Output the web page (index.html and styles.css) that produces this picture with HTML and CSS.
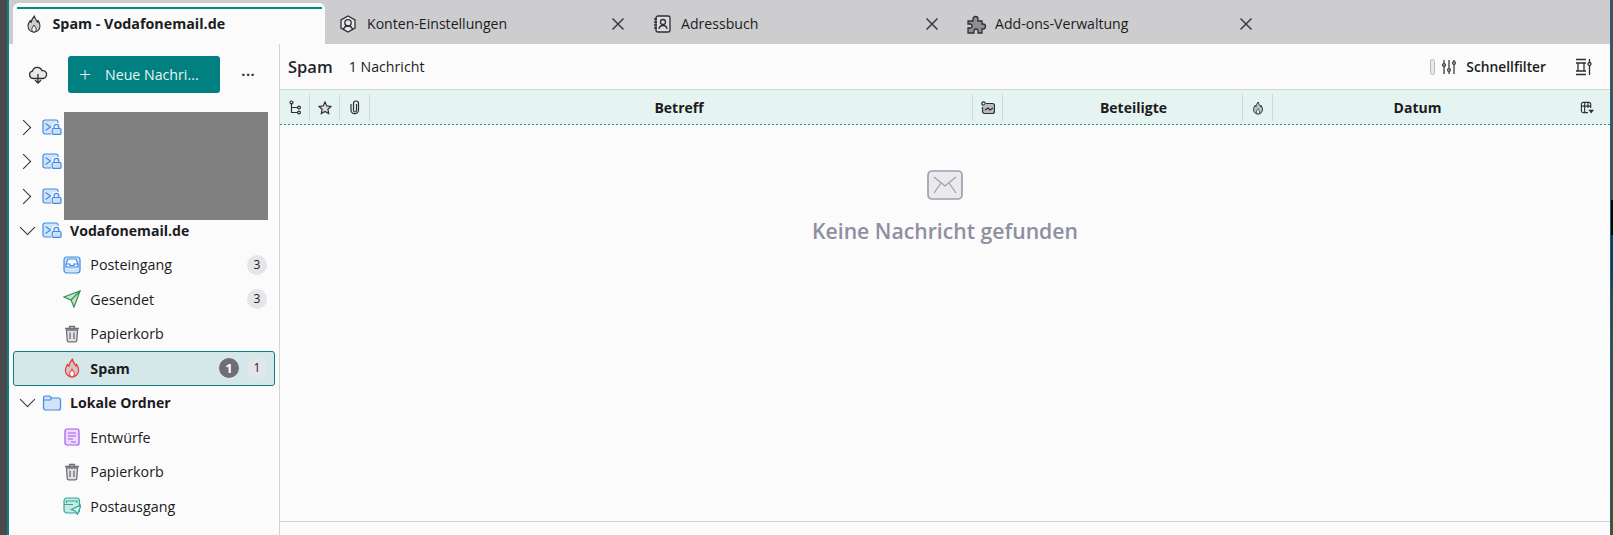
FILE: index.html
```html
<!DOCTYPE html>
<html lang="de">
<head>
<meta charset="utf-8">
<title>Spam - Vodafonemail.de</title>
<link rel="stylesheet" href="styles.css">
</head>
<body>
<svg width="0" height="0" class="defs">
  <defs>
    <symbol id="acct" viewBox="0 0 20 16">
      <path d="M1 3a2 2 0 0 1 2-2h11a2 2 0 0 1 2 2v10a2 2 0 0 1-2 2H3a2 2 0 0 1-2-2z" fill="#d3e4f8" stroke="#3d8be8" stroke-width="1.2"/>
      <path d="M3.500 4.500 8.500 8l-5 3.500" fill="none" stroke="#3d8be8" stroke-width="1.2"/>
      <path d="M11.500 9.500V8a2.900 2.900 0 0 1 5.800 0v1.500" fill="none" stroke="#fbfbfc" stroke-width="3.400"/>
      <rect x="9" y="8.500" width="11" height="7.500" fill="#fbfbfc"/>
      <path d="M12 9.500V7.800a2.400 2.400 0 0 1 4.800 0v1.700" fill="none" stroke="#3d8be8" stroke-width="1.2"/>
      <rect x="10.200" y="9.500" width="8.800" height="5.800" rx="1" fill="#cfe1f7" stroke="#3d8be8" stroke-width="1.2"/>
    </symbol>
    <symbol id="trash" viewBox="0 0 16 18">
      <path d="M2.500 5h11l-.7 10.500a1.500 1.500 0 0 1-1.500 1.400H4.700a1.500 1.500 0 0 1-1.500-1.400z" fill="#e0e0e5" stroke="#6e6e78" stroke-width="1.3"/>
      <path d="M1 3.500h14M5.500 3V1.500h5V3M6 7.500V14M10 7.500V14" fill="none" stroke="#6e6e78" stroke-width="1.3"/>
    </symbol>
    <symbol id="flame" viewBox="0 0 16 18">
      <g transform="translate(1.2 0) scale(.85 1)">
        <path d="M8.500 1c.3 3 2.200 4 3.700 6.200.4-.6.500-1 .5-1.700C14 7 15 9 15 11c0 3.600-3 6-7 6s-7-2.400-7-6c0-2.400 1.400-4 2.400-5.400.3.800.6 1.300 1.300 1.800C4.900 5 6.500 2.800 8.500 1z" fill="currentColor" fill-opacity=".22" stroke="currentColor" stroke-width="1.3" stroke-linejoin="round"/>
        <path d="M8 10c.4 1.400 2.600 2.300 2.600 4.200 0 1.100-.7 2-1.600 2.800H7c-.9-.8-1.600-1.700-1.600-2.800C5.400 12.300 7.600 11.400 8 10z" fill="#fbfbfc" fill-opacity=".85" stroke="currentColor" stroke-width="1"/>
      </g>
    </symbol>
    <symbol id="close" viewBox="0 0 14 14">
      <path d="M1.500 1.500l11 11M12.500 1.500l-11 11" fill="none" stroke="#3a3a40" stroke-width="1.500"/>
    </symbol>
  </defs>
</svg>

<div class="desk-left"></div>
<div class="window">
  <nav class="tabs">
    <div class="tab tab-active">
      <svg class="tab-icon" width="16" height="18"><use href="#flame"/></svg>
      <span class="tab-title">Spam - Vodafonemail.de</span>
    </div>
    <div class="tab">
      <svg class="tab-icon" width="18" height="18" viewBox="0 0 18 18" fill="none" stroke="#2e2e33" stroke-width="1.3">
        <path d="M9 1l7 4v8l-7 4-7-4V5z" fill="#e8e8ea"/>
        <circle cx="9" cy="7.800" r="3.200"/>
        <path d="M4.500 14.500c.5-2.500 2.300-3.500 4.500-3.500s4 1 4.500 3.500"/>
      </svg>
      <span class="tab-title">Konten-Einstellungen</span>
      <svg class="tab-close" width="14" height="14"><use href="#close"/></svg>
    </div>
    <div class="tab">
      <svg class="tab-icon" width="18" height="18" viewBox="0 0 18 18" fill="none" stroke="#2e2e33" stroke-width="1.3">
        <rect x="3" y="1" width="14" height="16" rx="2" fill="#dcdce0"/>
        <circle cx="10" cy="7" r="2.500"/>
        <path d="M6 14c.3-2.500 2-3.500 4-3.500s3.700 1 4 3.500M1 4h3M1 7h3M1 10h3M1 13h3"/>
      </svg>
      <span class="tab-title">Adressbuch</span>
      <svg class="tab-close" width="14" height="14"><use href="#close"/></svg>
    </div>
    <div class="tab">
      <svg class="tab-icon icon-wide" width="20" height="20" viewBox="0 0 20 20" fill="#8f8f95" stroke="#2e2e33" stroke-width="1.3">
        <path d="M1 7h5V5a2.500 2.500 0 1 1 5 0v2h4v3h1a2.500 2.500 0 1 1 0 5h-1v4h-4v-2a2 2 0 1 0-4 0v2H1v-5h2a2 2 0 1 0 0-4H1z"/>
      </svg>
      <span class="tab-title">Add-ons-Verwaltung</span>
      <svg class="tab-close" width="14" height="14"><use href="#close"/></svg>
    </div>
  </nav>

  <div class="body">
    <aside class="sidebar">
      <div class="side-top">
        <svg class="cloud" width="20" height="18" viewBox="0 0 20 18" fill="#e8e8ea" stroke="#2e2e33" stroke-width="1.3">
          <path d="M5 12.500a3.700 3.700 0 0 1-.5-7.300 5 5 0 0 1 9.500-.6 3.900 3.900 0 0 1 1.200 7.900z"/>
          <path d="M10 8v9M7 14l3 3 3-3" fill="none"/>
        </svg>
        <button class="new-msg"><span class="plus">+</span><span>Neue Nachri...</span></button>
        <span class="more">···</span>
      </div>

      <ul class="tree">
        <li class="row account"><span class="chev chev-right"></span><svg width="20" height="16"><use href="#acct"/></svg></li>
        <li class="row account"><span class="chev chev-right"></span><svg width="20" height="16"><use href="#acct"/></svg></li>
        <li class="row account"><span class="chev chev-right"></span><svg width="20" height="16"><use href="#acct"/></svg></li>
        <li class="row account"><span class="chev chev-down"></span><svg width="20" height="16"><use href="#acct"/></svg><span class="acct-name">Vodafonemail.de</span></li>
        <li class="row folder">
          <svg class="f-icon" width="18" height="18" viewBox="0 0 18 18" fill="none" stroke="#3d8be8" stroke-width="1.2">
            <rect x="1" y="1" width="16" height="16" rx="3" fill="#d3e4f8"/>
            <path d="M5 3h8l2 5v3H3V8z" fill="#fbfbfc"/>
            <path d="M3 8h4v1.500h4V8h4"/>
          </svg>
          <span class="f-name">Posteingang</span><span class="count">3</span>
        </li>
        <li class="row folder">
          <svg class="f-icon" width="18" height="18" viewBox="0 0 18 18" fill="#c9e4d0" stroke="#2f8f4e" stroke-width="1.2">
            <path d="M17 1 11 17l-3-7-7-3z"/><path d="M17 1 8 10" fill="none"/>
          </svg>
          <span class="f-name">Gesendet</span><span class="count">3</span>
        </li>
        <li class="row folder">
          <svg class="f-icon" width="18" height="18"><use href="#trash"/></svg>
          <span class="f-name">Papierkorb</span>
        </li>
        <li class="row folder selected">
          <svg class="f-icon flame-red" width="18" height="20"><use href="#flame"/></svg>
          <span class="f-name strong">Spam</span><span class="unread">1</span><span class="count">1</span>
        </li>
        <li class="row account"><span class="chev chev-down"></span>
          <svg width="20" height="16" viewBox="0 0 20 16" fill="#d3e4f8" stroke="#3d8be8" stroke-width="1.2">
            <path d="M1.500 3a2 2 0 0 1 2-2h4l2 2h7a2 2 0 0 1 2 2v8a2 2 0 0 1-2 2h-13a2 2 0 0 1-2-2z"/><path d="M1.500 5h7l1-2" fill="none"/>
          </svg>
          <span class="acct-name">Lokale Ordner</span>
        </li>
        <li class="row folder">
          <svg class="f-icon" width="18" height="18" viewBox="0 0 18 18" fill="none" stroke="#a855f0" stroke-width="1.2">
            <rect x="2" y="1" width="14" height="16" rx="2" fill="#ecdcfb"/>
            <path d="M5 5h8M5 8h8M5 11h5M8 14h5"/>
          </svg>
          <span class="f-name">Entwürfe</span>
        </li>
        <li class="row folder">
          <svg class="f-icon" width="18" height="18"><use href="#trash"/></svg>
          <span class="f-name">Papierkorb</span>
        </li>
        <li class="row folder">
          <svg class="f-icon" width="18" height="18" viewBox="0 0 18 18" fill="none" stroke="#2fa89a" stroke-width="1.2">
            <rect x="1" y="1" width="15.500" height="15" rx="3" fill="#c6e9e3"/>
            <path d="M3.500 6V4h10.500v2M1 7.500h9"/>
            <path d="M18 8 14.500 17.500 12.500 14 8.500 12.500z" fill="#f0faf8"/>
          </svg>
          <span class="f-name">Postausgang</span>
        </li>
      </ul>
      <div class="redaction"></div>
    </aside>

    <main class="main">
      <header class="msg-head">
        <span class="folder-title">Spam</span>
        <span class="msg-count">1 Nachricht</span>
        <span class="spacer"></span>
        <span class="toggle"></span>
        <svg class="sliders" width="14" height="16" viewBox="0 0 14 16" fill="none" stroke="#2e2e33" stroke-width="1.2">
          <path d="M2 1v3M2 8v7M7 1v8M7 13v2M12 1v1M12 6v9"/>
          <circle cx="2" cy="6" r="1.400"/><circle cx="7" cy="11" r="1.400"/><circle cx="12" cy="4" r="1.400"/>
        </svg>
        <span class="filter-label">Schnellfilter</span>
        <svg class="layout-btn" width="16" height="18" viewBox="0 0 16 18" fill="none" stroke="#2e2e33" stroke-width="1.3">
          <path d="M0 1.500h10M0 5h10M2 5v8M8 5v8M0 13h10M0 16.500h10M13.500 1v3M13.500 8v9"/>
          <circle cx="13.500" cy="6" r="1.500"/>
        </svg>
      </header>

      <div class="col-head">
        <div class="col col-icon">
          <svg width="12" height="16" viewBox="0 0 12 16" fill="none" stroke="#2e2e33" stroke-width="1.2">
            <path d="M2.500 3v9.500h6M2.500 7.500h6"/><circle cx="2.500" cy="2.500" r="1.500"/><circle cx="10" cy="7.500" r="1.400"/><circle cx="10" cy="12.500" r="1.400"/>
          </svg>
        </div>
        <div class="col col-icon">
          <svg width="14" height="14" viewBox="0 0 14 14" fill="#dcdce0" stroke="#2e2e33" stroke-width="1.2">
            <path d="M7 1l1.800 3.900 4.200.5-3.100 2.900.8 4.200L7 10.400 3.300 12.500l.8-4.200L1 5.400l4.200-.5z"/>
          </svg>
        </div>
        <div class="col col-icon">
          <svg width="10" height="15" viewBox="0 0 10 15" fill="none" stroke="#2e2e33" stroke-width="1.2">
            <path d="M6.500 4v6.500a1.500 1.500 0 0 1-3 0V3.500a2.500 2.500 0 0 1 5 0v7a3.800 3.800 0 0 1-7.500 0V4"/>
          </svg>
        </div>
        <div class="col col-subject">Betreff</div>
        <div class="col col-icon">
          <svg width="14" height="14" viewBox="0 0 14 14" fill="#b9b9be" stroke="#2e2e33" stroke-width="1.2">
            <circle cx="2.500" cy="2.500" r="1.700" fill="none"/>
            <path d="M5 2.500h6.500a2 2 0 0 1 2 2v6a2 2 0 0 1-2 2h-8a2 2 0 0 1-2-2V6"/>
            <path d="M4 9l3-2 2 2 3-2" fill="none"/>
          </svg>
        </div>
        <div class="col col-people">Beteiligte</div>
        <div class="col col-icon col-spam">
          <svg width="12" height="14"><use href="#flame"/></svg>
        </div>
        <div class="col col-date">Datum</div>
        <div class="col col-picker">
          <svg width="15" height="14" viewBox="0 0 15 14" stroke="#2e2e33" stroke-width="1.2" fill="none">
            <path d="M11.500 7V3a2 2 0 0 0-2-2h-6a2 2 0 0 0-2 2v7a2 2 0 0 0 2 2h5M1.500 5h10M5 1v11M8.500 1v6"/>
            <path d="M9 9h6l-3 4z" fill="#2e2e33" stroke="none"/>
          </svg>
        </div>
      </div>

      <section class="empty">
        <svg width="36" height="30" viewBox="0 0 36 30" fill="#eaeaec" stroke="#a0a0ae" stroke-width="1.3">
          <rect x="1" y="1" width="34" height="28" rx="4" stroke-width="1.7"/>
          <path d="M7 7l11 9 11-9M7 23l7-10M29 23l-7-10" fill="none"/>
        </svg>
        <p class="empty-text">Keine Nachricht gefunden</p>
      </section>
      <div class="status"></div>
    </main>
  </div>
</div>
<div class="desk-right"></div>
</body>
</html>
```

FILE: styles.css
```css
* { box-sizing: border-box; }
html, body { margin: 0; height: 100%; overflow: hidden; }
body {
  font-family: "Open Sans", "Noto Sans", sans-serif;
  font-size: 14px;
  color: #1c1c20;
  background: #4a4a4a;
  display: flex;
}
.defs { position: absolute; }
.desk-left { width: 7px; flex: none; background: #4a4a4a; }
.desk-right {
  width: 2px;
  flex: none;
  background: linear-gradient(#4f4f52 0 200px, #000 200px 235px, #123a5e 235px 270px, #3c4650 300px, #4a4a40 400px, #5a4a20 535px);
}
.window {
  height: 535px;
  flex: 1;
  min-width: 0;
  display: flex;
  flex-direction: column;
  border-left: 2px solid #0a7f84;
  border-right: 1px solid #0c6a74;
  background: #fbfbfc;
}
.tabs {
  height: 44px;
  flex: none;
  display: flex;
  background: #cdcdcf;
  padding: 3px 0 0 4px;
}
.tab {
  width: 314px;
  padding: 0 14.5px 0 14px;
  display: flex;
  align-items: center;
  gap: 10px;
  font-size: 14.1px;
}
.tab-active {
  position: relative;
  width: 312px;
  background: #fbfbfc;
  border-radius: 6px 6px 0 0;
  font-weight: 700;
  font-size: 14.3px;
  padding-left: 12.5px;
  gap: 11px;
  color: #2e2e33;
}
.tab-active::before {
  content: "";
  position: absolute;
  left: 4px;
  right: 3px;
  top: 4px;
  height: 2px;
  background: #008c7e;
}
.tab-title { flex: 1; color: #1c1c20; }
.tab-icon { flex: none; }
.icon-wide { margin-right: -2px; }
.body { flex: 1; display: flex; position: relative; min-height: 0; }
.sidebar {
  position: relative;
  width: 271px;
  flex: none;
  border-right: 1px solid #d3d3d6;
  padding-top: 12px;
}
.side-top {
  display: flex;
  align-items: center;
  height: 37px;
  padding-left: 19px;
}
.new-msg {
  margin-left: 20px;
  width: 152px;
  height: 37px;
  background: #008080;
  color: #e8f6f5;
  border: 0;
  border-radius: 3px;
  font: 14.2px "Open Sans", sans-serif;
  display: flex;
  align-items: center;
  gap: 14px;
  padding: 0 0 0 11px;
}
.plus { font-size: 21px; line-height: 1; font-weight: 300; }
.more { margin-left: 21px; font-size: 17px; font-weight: 600; color: #2e2e33; }
.tree { list-style: none; margin: 16.5px 0 0; padding: 0 4px; }
.row { height: 34.5px; display: flex; align-items: center; }
.account { padding-left: 9px; }
.account svg { margin-left: 10px; flex: none; }
.chev { width: 10px; height: 10px; flex: none; position: relative; }
.chev::before {
  content: "";
  position: absolute;
  width: 10px;
  height: 10px;
  border-right: 1.3px solid #2e2e33;
  border-bottom: 1.3px solid #2e2e33;
}
.chev-right::before { transform: rotate(-45deg); left: -4px; top: 0; }
.chev-down::before { transform: rotate(45deg); left: 0; top: -3.5px; }
.acct-name { font-weight: 700; font-size: 14.1px; margin-left: 8px; }
.folder { padding-left: 50px; padding-right: 8px; font-size: 14.3px; }
.f-icon { flex: none; margin-right: 9.3px; }
.f-name { flex: 1; }
.strong { font-weight: 700; }
.count, .unread {
  width: 20px;
  height: 20px;
  border-radius: 50%;
  background: #e6e6e9;
  text-align: center;
  font-size: 12px;
  line-height: 20px;
  flex: none;
}
.unread {
  background: #6e6e75;
  color: #fff;
  font-weight: 700;
  font-size: 13px;
  margin-right: 8px;
}
.selected {
  background: #d4e8e9;
  border: 1px solid #0a8086;
  border-radius: 3px;
  padding-right: 7px;
  padding-left: 49px;
}
.flame-red { color: #e5393f; }
.redaction {
  position: absolute;
  left: 55px;
  top: 68px;
  width: 204px;
  height: 108px;
  background: #808080;
}
.main { flex: 1; display: flex; flex-direction: column; min-width: 0; }
.msg-head {
  height: 46px;
  flex: none;
  display: flex;
  align-items: center;
  padding: 0 18px 0 8px;
  border-bottom: 1px solid #d5d5d7;
}
.folder-title { font-size: 16.5px; font-weight: 600; color: #25252a; }
.msg-count { margin-left: 16px; font-size: 14.2px; }
.spacer { flex: 1; }
.toggle {
  width: 5px;
  height: 16px;
  background: #e8e8ea;
  border: 1px solid #b8b8bc;
  border-radius: 3px;
  margin-right: 7px;
}
.filter-label { font-weight: 600; font-size: 13.8px; margin-left: 10px; }
.layout-btn { margin-left: 30px; }
.col-head {
  height: 35px;
  flex: none;
  display: flex;
  padding-bottom: 1px;
  background:
    repeating-linear-gradient(90deg, #1f9d8d 0 2px, transparent 2px 4px) left bottom / 100% 1px no-repeat,
    #e5f4f1;
  font-weight: 700;
  font-size: 14px;
}
.col {
  display: flex;
  align-items: center;
  justify-content: center;
  border-right: 1px solid #d0dbd9;
  margin: 4px 0 0;
  height: 27px;
}
.col-icon { width: 30px; }
.col-subject { width: 603px; padding-left: 16px; }
.col-people { width: 240px; padding-left: 22px; }
.col-date { flex: 1; border-right: 0; padding-right: 18px; }
.col-picker { width: 30px; border-right: 0; padding-right: 16px; }
.empty {
  flex: 1;
  display: flex;
  flex-direction: column;
  align-items: center;
  padding-top: 45px;
  color: #8f8f9f;
}
.empty-text { margin: 17px 0 0; font-size: 21.2px; font-weight: 600; line-height: 28px; }
.status { height: 14px; flex: none; border-top: 1px solid #d3d3d6; }
```
